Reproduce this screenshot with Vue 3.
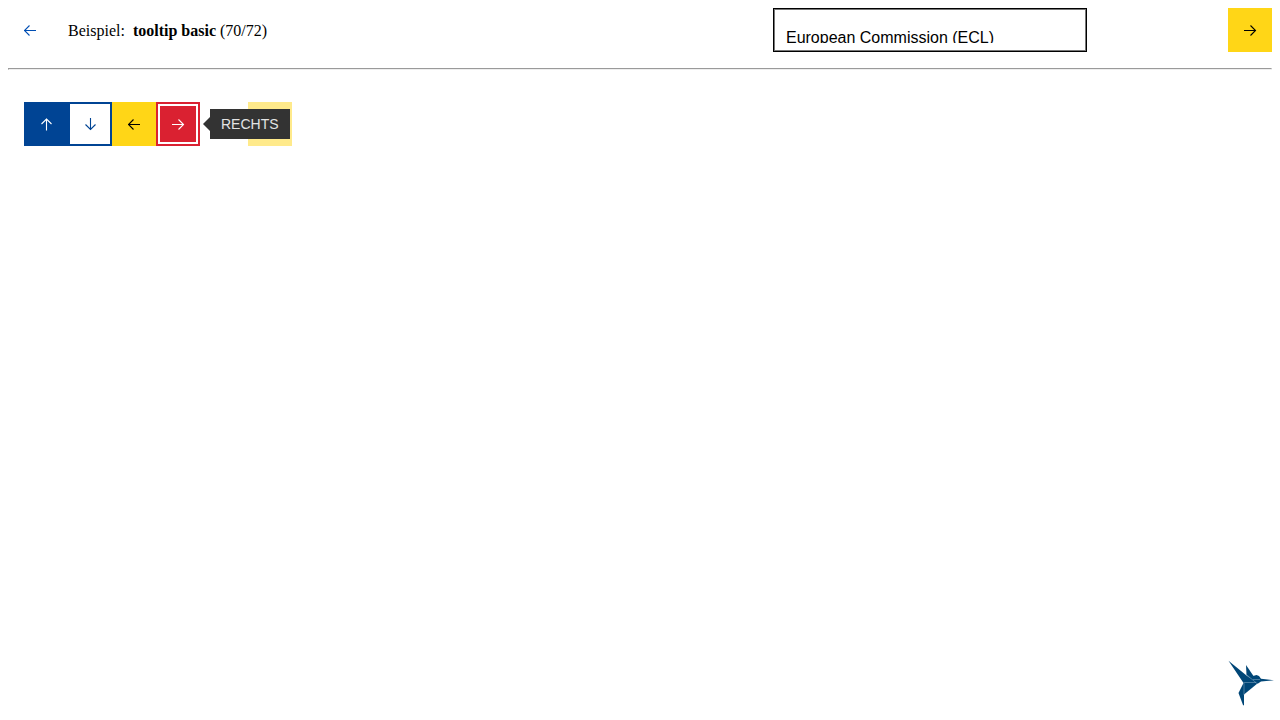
<script setup>
import { ref } from 'vue'

const system = ref('ec')
const arrows = {
  left: 'M0 6.5h12M5.500 1.500l-5 5 5 5',
  right: 'M0 6.5h12M6.500 1.500l5 5-5 5',
  up: 'M6.500 12.500V.5M1.500 6l5-5 5 5',
  down: 'M6.500 0v12M1.500 6.500l5 5 5-5'
}
</script>

<template>
  <div class="page">
    <header class="bar">
      <button class="btn ghost" aria-label="Zurück">
        <svg class="icon" viewBox="0 0 13 13"><path :d="arrows.left" /></svg>
      </button>
      <div class="title">
        <span>Beispiel:</span>
        <span><b>tooltip basic</b> (70/72)</span>
      </div>
      <div class="picker">
        <select v-model="system" class="select" aria-label="System">
          <option value="ec">European Commission (ECL)</option>
          <option value="eu">European Union (ECL)</option>
        </select>
      </div>
      <button class="btn cta" aria-label="Weiter">
        <svg class="icon" viewBox="0 0 13 13"><path :d="arrows.right" /></svg>
      </button>
    </header>
    <hr class="rule" />
    <main class="demo">
      <button class="btn primary" aria-label="Oben">
        <svg class="icon" viewBox="0 0 13 13"><path :d="arrows.up" /></svg>
      </button>
      <button class="btn secondary" aria-label="Unten">
        <svg class="icon" viewBox="0 0 13 13"><path :d="arrows.down" /></svg>
      </button>
      <button class="btn cta" aria-label="Links">
        <svg class="icon" viewBox="0 0 13 13"><path :d="arrows.left" /></svg>
      </button>
      <div class="anchor">
        <button class="btn danger" aria-describedby="tip" aria-label="Rechts">
          <svg class="icon" viewBox="0 0 13 13"><path :d="arrows.right" /></svg>
        </button>
        <div id="tip" class="tip" role="tooltip">RECHTS</div>
      </div>
      <button class="btn cta off" disabled aria-label="Deaktiviert"></button>
    </main>
    <a class="bird" href="#" aria-label="Start">
      <svg viewBox="0 0 48 48">
        <path d="M.5.7L18.500 15.500L26 21L27 23L15.500 23Z" />
        <path d="M18 5L25.500 16L23 19L18.500 15Z" />
        <path d="M22 18L25 16L28.500 15L31 16L33 18.800L46 20.300L33 21.500L30 23.500L25 22Z" />
        <path d="M16 22.500L27 22L30 23L16 34.500Z" />
        <path d="M15.500 23L16 23V45.500L15 45L10.500 33Z" />
        <path class="seam" d="M18.300 14.500L29 23.500M15.500 22.500H28M16 23V35M25 19.500L32 19.500" />
      </svg>
    </a>
  </div>
</template>

<style>
body {
  margin: 0;
  background: #fff;
}
</style>

<style scoped>
.page {
  padding: 8px;
  font-family: "Liberation Serif", serif;
  font-size: 16px;
  line-height: 20px;
  color: #000;
}
.bar {
  display: flex;
  align-items: center;
}
.title {
  flex: 1;
  display: flex;
  gap: 8px;
  padding: 2px 0 0 16px;
}
.picker {
  width: 36%;
}
.select {
  display: block;
  box-sizing: border-box;
  width: 69%;
  height: 44px;
  padding: 20px 8px 8px 12px;
  appearance: none;
  background: #fff;
  border: 1px solid #000;
  border-radius: 0;
  box-shadow: inset 0 0 0 1px #777;
  font: 16px/18px "Liberation Sans", sans-serif;
  color: #000;
}
.rule {
  margin: 16px 0 32px;
}
.btn {
  display: flex;
  align-items: center;
  justify-content: center;
  box-sizing: border-box;
  width: 44px;
  height: 44px;
  padding: 0;
  border: 0;
}
.icon {
  width: 13px;
  height: 13px;
  fill: none;
  stroke: currentColor;
  stroke-width: 1.1;
}
.ghost {
  background: transparent;
  color: #004eb3;
}
.cta {
  background: #ffd617;
  color: #000;
}
.primary {
  background: #004494;
  color: #fff;
}
.secondary {
  background: #fff;
  border: 2px solid #004494;
  color: #004494;
}
.danger {
  background: #da2131;
  border: 2px solid #da2131;
  box-shadow: inset 0 0 0 2px #fff;
  color: #fff;
}
.demo {
  display: flex;
  padding: 0 16px;
}
.anchor {
  position: relative;
}
.off {
  margin-left: 48px;
  opacity: 0.5;
}
.tip {
  position: absolute;
  z-index: 1;
  left: 54px;
  top: 7px;
  padding: 6px 11px;
  background: #333;
  color: #e3e3e3;
  font: 14px/18px "Liberation Sans", sans-serif;
}
.tip::before {
  content: "";
  position: absolute;
  right: 100%;
  top: 8px;
  border: solid transparent;
  border-width: 7px 7px 7px 0;
  border-right-color: #333;
}
.bird {
  position: fixed;
  right: 4px;
  bottom: 12px;
  width: 48px;
  height: 48px;
}
.bird svg {
  display: block;
  fill: #004677;
}
.bird .seam {
  fill: none;
  stroke: #8fb0c8;
  stroke-width: 0.5;
}
</style>
